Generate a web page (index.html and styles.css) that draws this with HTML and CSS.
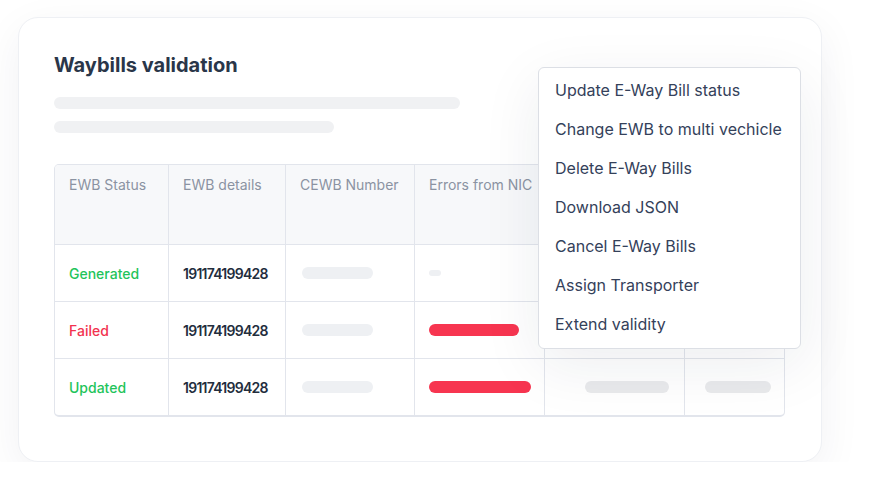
FILE: index.html
```html
<!DOCTYPE html>
<html>
<head>
<meta charset="utf-8">
<link rel="stylesheet" href="styles.css">
</head>
<body>
<div class="stage">
  <div class="card">
    <h1 class="title">Waybills validation</h1>
    <div class="skel skel-long"></div>
    <div class="skel skel-short"></div>
    <div class="table">
      <div class="cell head">EWB Status</div>
      <div class="cell head">EWB details</div>
      <div class="cell head">CEWB Number</div>
      <div class="cell head">Errors from NIC</div>
      <div class="cell head"></div>
      <div class="cell head last"></div>

      <div class="cell status ok">Generated</div>
      <div class="cell num">191174199428</div>
      <div class="cell cewb"><span class="bar grey" style="width:71px"></span></div>
      <div class="cell"><span class="bar grey tiny" style="width:12px"></span></div>
      <div class="cell"></div>
      <div class="cell last"></div>

      <div class="cell status bad">Failed</div>
      <div class="cell num">191174199428</div>
      <div class="cell cewb"><span class="bar grey" style="width:71px"></span></div>
      <div class="cell"><span class="bar red" style="width:90px"></span></div>
      <div class="cell"></div>
      <div class="cell last"></div>

      <div class="cell status ok bottom">Updated</div>
      <div class="cell num bottom">191174199428</div>
      <div class="cell cewb bottom"><span class="bar grey" style="width:71px"></span></div>
      <div class="cell bottom"><span class="bar red" style="width:102px"></span></div>
      <div class="cell bottom col5"><span class="bar grey2" style="width:84px"></span></div>
      <div class="cell bottom last col6"><span class="bar grey2" style="width:66px"></span></div>
    </div>

    <ul class="menu">
      <li>Update E-Way Bill status</li>
      <li>Change EWB to multi vechicle</li>
      <li>Delete E-Way Bills</li>
      <li>Download JSON</li>
      <li>Cancel E-Way Bills</li>
      <li>Assign Transporter</li>
      <li>Extend validity</li>
    </ul>
  </div>
</div>
</body>
</html>
```

FILE: styles.css
```css
* { box-sizing: border-box; }
html, body { margin: 0; padding: 0; background: #ffffff; }
body { font-family: Inter, "Noto Sans", sans-serif; color: #2b3648; }

.stage { padding: 17px 0 0 18px; }

.card {
  position: relative;
  width: 804px;
  height: 445px;
  background: #ffffff;
  border: 1px solid #eef0f4;
  border-radius: 20px;
  box-shadow: 0 12px 44px rgba(30, 40, 70, 0.06);
  padding: 35px 0 0 35px;
}

.title {
  margin: 0;
  font-size: 20px;
  line-height: 24px;
  font-weight: 700;
  color: #2a3649;
}

.skel { height: 12px; border-radius: 6px; background: #f0f1f3; }
.skel-long { width: 406px; margin-top: 20px; }
.skel-short { width: 280px; margin-top: 12px; }

.table {
  margin-top: 31px;
  width: 731px;
  display: grid;
  grid-template-columns: 114px 117px 129px 130px 140px 101px;
  grid-template-rows: 80px 57px 57px 56px;
  border: 1px solid #e2e5ec;
  border-bottom-width: 2px;
  border-radius: 5px;
  overflow: hidden;
}

.cell {
  border-right: 1px solid #e2e5ec;
  border-bottom: 1px solid #e2e5ec;
  padding: 0 4px 0 14px;
  display: flex;
  align-items: center;
  font-size: 14px;
  white-space: nowrap;
}
.cell.last { border-right: none; }
.cell.bottom { border-bottom: none; }
.cell.cewb { padding-left: 16px; }
.cell.col5 { padding-left: 40px; }
.cell.col6 { padding-left: 20px; }

.head {
  background: #f7f8fa;
  align-items: flex-start;
  padding-top: 12px;
  color: #8b93a2;
  font-size: 14px;
  line-height: 16px;
}

.status { font-weight: 500; }
.ok { color: #1fc45b; }
.bad { color: #f2334f; }
.num { font-weight: 600; color: #232d3d; letter-spacing: -0.75px; }

.bar { display: block; height: 12px; border-radius: 6px; }
.bar.tiny { height: 6px; }
.grey { background: #eef0f3; }
.grey2 { background: #e9eaec; }
.red { background: #f73550; }

.menu {
  position: absolute;
  left: 519px;
  top: 49px;
  width: 263px;
  height: 282px;
  margin: 0;
  padding: 3px 0 0 16px;
  list-style: none;
  background: #ffffff;
  border: 1px solid #dcdfe5;
  border-radius: 6px;
  box-shadow: 0 16px 60px rgba(30, 40, 70, 0.08);
}
.menu li {
  font-size: 16px;
  line-height: 39px;
  color: #34415a;
}
```
